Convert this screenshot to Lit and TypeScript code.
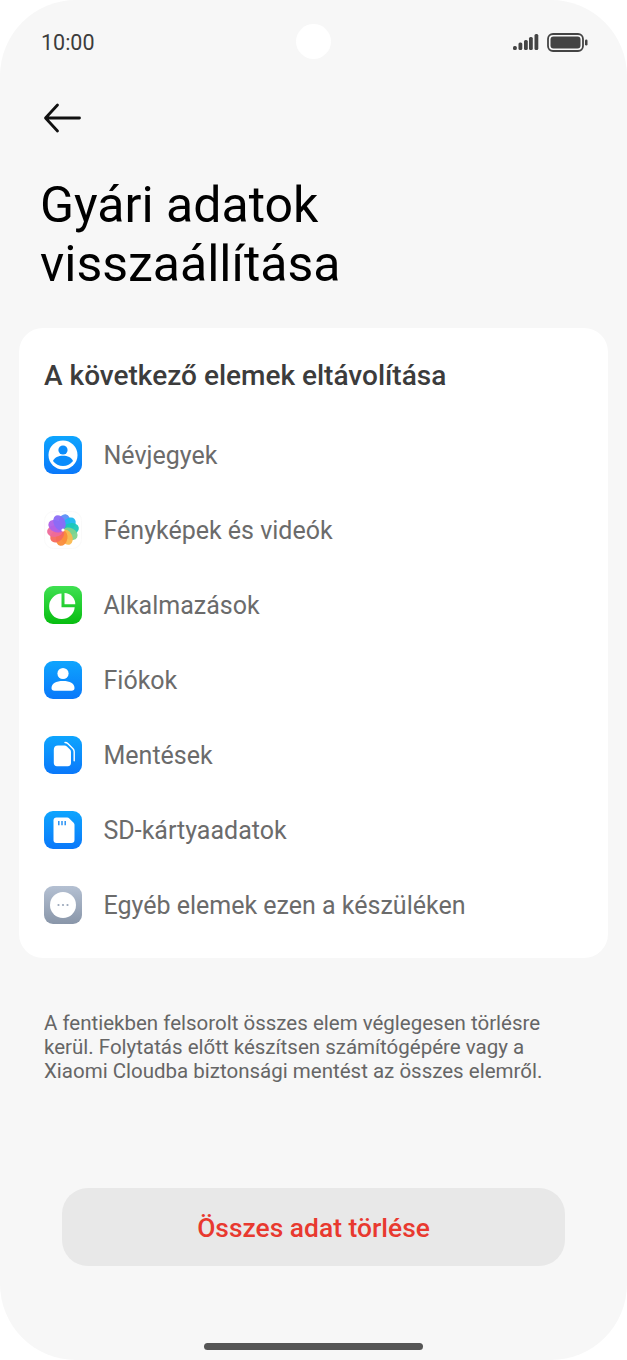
import { LitElement, html, css, svg } from 'lit';
import { customElement } from 'lit/decorators.js';

const blue = (id: string, inner: unknown) => html`
  <svg class="icon" viewBox="0 0 38 38">
    <defs>
      <linearGradient id=${id} x1="0" y1="0" x2="0" y2="1">
        <stop offset="0" stop-color="#0ea5fe"></stop>
        <stop offset="1" stop-color="#0a78fa"></stop>
      </linearGradient>
    </defs>
    <rect width="38" height="38" rx="9" fill="url(#${id})"></rect>
    ${inner}
  </svg>`;

const petals = ['#5b90f8', '#20b8f0', '#1cc8b8', '#7fd48c', '#fbb94f', '#fa8c3a', '#f56a5e', '#ee6a9a', '#b060e8', '#8a6cf5'];

const icons = {
  contacts: blue('g1', svg`
    <circle cx="19" cy="19" r="14.5" fill="#fff"></circle>
    <circle cx="19" cy="14" r="4.6" fill="#0b8cfb"></circle>
    <path d="M9 25c1.400-3.600 5.400-5.300 10-5.300s8.600 1.700 10 5.300a12.500 12.500 0 0 1-20 0z" fill="#0b8cfb"></path>`),
  photos: html`
    <svg class="icon" viewBox="0 0 38 38">
      <rect x="0.500" y="0.500" width="37" height="37" rx="9" fill="#fff" stroke="#fafafa"></rect>
      ${petals.map((c, i) => svg`
        <ellipse cx="19" cy="11" rx="5.800" ry="8" fill=${c} fill-opacity="0.95"
          transform="rotate(${i * 36 + 10} 19 19)"></ellipse>`)}
      <circle cx="19" cy="19" r="1.600" fill="#fff"></circle>
    </svg>`,
  apps: html`
    <svg class="icon" viewBox="0 0 38 38">
      <defs>
        <linearGradient id="g2" x1="0" y1="0" x2="0" y2="1">
          <stop offset="0" stop-color="#3fe052"></stop>
          <stop offset="1" stop-color="#07bd10"></stop>
        </linearGradient>
      </defs>
      <rect width="38" height="38" rx="9" fill="url(#g2)"></rect>
      <path d="M17.500 7.500v13.800h13.200A12.800 12.800 0 1 1 17.500 7.500z" fill="#fff"></path>
      <path d="M20.500 7a11 11 0 0 1 10.800 11.300H20.500z" fill="#fff"></path>
    </svg>`,
  accounts: blue('g3', svg`
    <circle cx="19" cy="12.500" r="5.600" fill="#fff"></circle>
    <path d="M7.500 27c0-4.600 4.600-7 11.500-7s11.500 2.400 11.500 7c0 1.800-1 2.800-3 2.800h-17c-2 0-3-1-3-2.800z" fill="#fff"></path>`),
  backups: blue('g4', svg`
    <path d="M14 9.500h6.500c1 0 1.700.3 2.400 1l3.100 3.100c.7.7 1 1.400 1 2.400v11c0 2-1.100 3.200-3.200 3.200H13c-2.100 0-3.200-1.200-3.200-3.200V13.700c0-2.700 1.500-4.200 4.200-4.200z" fill="#fff"></path>
    <path d="M21 6.500c1.300 0 2.200.4 3 1.200l5 5c.8.800 1.200 1.700 1.200 3v9" fill="none" stroke="#fff" stroke-width="1.400" stroke-linecap="round"></path>`),
  sd: blue('g5', svg`
    <path d="M12.500 6.500h10.700c.9 0 1.500.3 2.100.9l4.300 4.300c.6.600.9 1.200.9 2.100V29c0 2-1.100 3-3 3H12.500c-2 0-3-1-3-3V9.500c0-2 1-3 3-3z" fill="#fff"></path>
    <path d="M14.800 10v4.300M18 10v4.300M21.200 10v4.300" stroke="#2a93f5" stroke-width="1.500"></path>`),
  other: html`
    <svg class="icon" viewBox="0 0 38 38">
      <defs>
        <linearGradient id="g6" x1="0" y1="0" x2="0" y2="1">
          <stop offset="0" stop-color="#b4c0d2"></stop>
          <stop offset="1" stop-color="#8996a9"></stop>
        </linearGradient>
      </defs>
      <rect width="38" height="38" rx="9" fill="url(#g6)"></rect>
      <circle cx="19" cy="19" r="13" fill="#fff"></circle>
      <circle cx="14.500" cy="19" r="1.100" fill="#9aa7ba"></circle>
      <circle cx="19" cy="19" r="1.100" fill="#9aa7ba"></circle>
      <circle cx="23.500" cy="19" r="1.100" fill="#9aa7ba"></circle>
    </svg>`,
};

const items = [
  { icon: icons.contacts, label: 'Névjegyek' },
  { icon: icons.photos, label: 'Fényképek és videók' },
  { icon: icons.apps, label: 'Alkalmazások' },
  { icon: icons.accounts, label: 'Fiókok' },
  { icon: icons.backups, label: 'Mentések' },
  { icon: icons.sd, label: 'SD-kártyaadatok' },
  { icon: icons.other, label: 'Egyéb elemek ezen a készüléken' },
];

@customElement('app-root')
export class AppRoot extends LitElement {
  static styles = css`
    :host {
      display: block;
      width: 627px;
      height: 1360px;
      background: #fff;
      font-family: Roboto, "Liberation Sans", sans-serif;
    }
    .screen {
      position: relative;
      box-sizing: border-box;
      width: 627px;
      height: 1360px;
      background: #f7f7f7;
      border-radius: 76px;
      display: flex;
      flex-direction: column;
      overflow: hidden;
    }
    .camera {
      position: absolute;
      left: 296px;
      top: 24px;
      width: 35px;
      height: 35px;
      border-radius: 50%;
      background: #fff;
    }
    .status {
      height: 84px;
      padding: 0 39px 0 41px;
      box-sizing: border-box;
      display: flex;
      align-items: center;
      justify-content: space-between;
      color: #3c3c3c;
      font-size: 21.500px;
      flex: none;
    }
    .time {
      padding-top: 1px;
    }
    .status-icons {
      display: flex;
      align-items: center;
      gap: 8px;
    }
    .back {
      display: block;
      margin: 17px 0 0 43px;
      width: 38px;
      height: 34px;
      flex: none;
    }
    h1 {
      margin: 41px 0 0 40px;
      font-size: 50px;
      line-height: 59px;
      font-weight: 400;
      color: #000;
    }
    .card {
      margin: 34px 19px 0;
      height: 630px;
      box-sizing: border-box;
      background: #fff;
      border-radius: 24px;
      padding: 28px 25px 0;
      flex: none;
    }
    h2 {
      margin: 0 0 22px;
      font-size: 28px;
      line-height: 40px;
      font-weight: 500;
      color: #3c3c3c;
    }
    .row {
      display: flex;
      align-items: center;
      gap: 21.500px;
      height: 75px;
      font-size: 25px;
      color: #6b6b6b;
    }
    .icon {
      width: 38px;
      height: 38px;
      margin-bottom: 1px;
      flex: none;
    }
    .note {
      margin: 53px 40px 0 44px;
      font-size: 20.500px;
      line-height: 24px;
      color: #666;
    }
    .action {
      margin: 105px 62px 0;
      height: 78px;
      box-sizing: border-box;
      padding-top: 1px;
      border-radius: 26px;
      background: #e8e8e8;
      display: flex;
      align-items: center;
      justify-content: center;
      font-size: 26.400px;
      font-weight: 500;
      color: #e8392f;
      flex: none;
    }
    .home {
      margin: 77px auto 0;
      width: 219px;
      height: 7px;
      border-radius: 4px;
      background: #555;
      flex: none;
    }
  `;

  render() {
    return html`
      <div class="screen">
        <div class="camera"></div>
        <div class="status">
          <span class="time">10:00</span>
          <div class="status-icons">
            <svg width="26" height="16" viewBox="0 0 26 16">
              <g fill="#444">
                <rect x="0" y="12" width="3.800" height="4" rx="1.500"></rect>
                <rect x="5.500" y="8.500" width="3.800" height="7.500" rx="1.500"></rect>
                <rect x="11" y="6" width="3.800" height="10" rx="1.500"></rect>
                <rect x="16" y="3" width="3.800" height="13" rx="1.500"></rect>
                <rect x="21.500" y="0" width="3.800" height="16" rx="1.500"></rect>
              </g>
            </svg>
            <svg width="41" height="19" viewBox="0 0 41 19">
              <rect x="1" y="1" width="35" height="17" rx="5" fill="none" stroke="#444" stroke-width="1.800"></rect>
              <rect x="3.500" y="3.500" width="30" height="12" rx="3" fill="#444"></rect>
              <rect x="38" y="6.500" width="2.500" height="6" rx="1.200" fill="#444"></rect>
            </svg>
          </div>
        </div>
        <svg class="back" viewBox="0 0 38 34">
          <path d="M36.500 17H3M14.500 4 2.500 17l12 13" fill="none" stroke="#111" stroke-width="2.800" stroke-linecap="round" stroke-linejoin="round"></path>
        </svg>
        <h1>Gyári adatok<br />visszaállítása</h1>
        <div class="card">
          <h2>A következő elemek eltávolítása</h2>
          ${items.map(
            (i) => html`<div class="row">${i.icon}<span>${i.label}</span></div>`
          )}
        </div>
        <p class="note">
          A fentiekben felsorolt összes elem véglegesen törlésre<br />
          kerül. Folytatás előtt készítsen számítógépére vagy a<br />
          Xiaomi Cloudba biztonsági mentést az összes elemről.
        </p>
        <div class="action">Összes adat törlése</div>
        <div class="home"></div>
      </div>
    `;
  }
}
